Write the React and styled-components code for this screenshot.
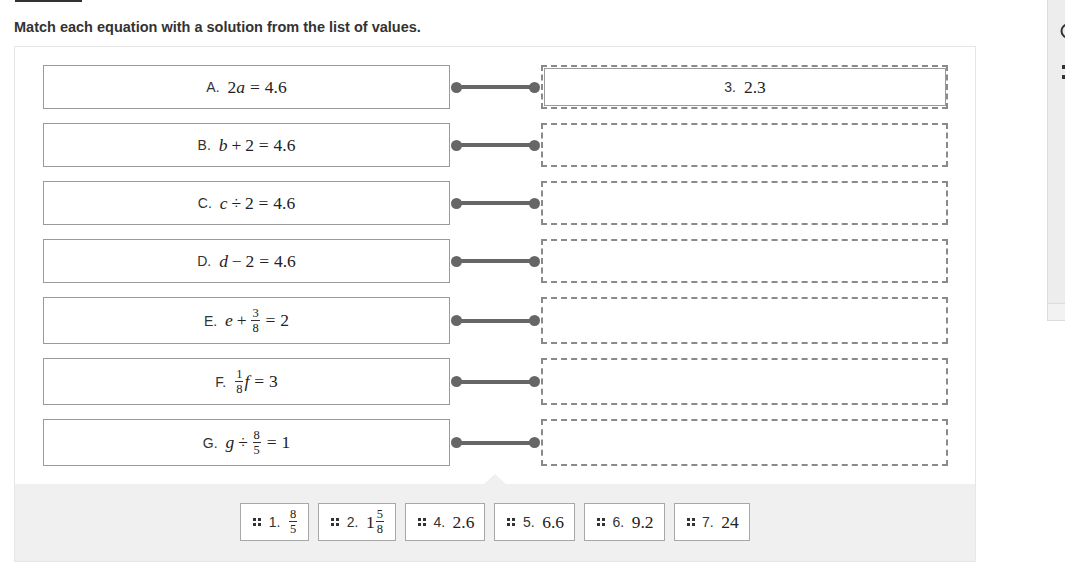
import React from 'react';
import styled, { createGlobalStyle } from 'styled-components';

const Global = createGlobalStyle`
  html, body { margin: 0; padding: 0; background: #fff; }
  body { font-family: "Liberation Sans", Arial, sans-serif; color: #333; }
`;

const Page = styled.div`
  width: 1065px;
  height: 571px;
  overflow: hidden;
  display: flex;
  align-items: flex-start;
`;

const Main = styled.main`
  margin-left: 14px;
  width: 962px;
  flex-shrink: 0;
`;

const TopRule = styled.div`
  margin-left: 1px;
  width: 67px;
  height: 2px;
  background: #333;
`;

const Title = styled.h1`
  margin: 17px 0 0;
  font-family: "Liberation Sans", Arial, sans-serif;
  font-size: 14.5px;
  font-weight: bold;
  line-height: 17px;
  color: #333;
`;

const Panel = styled.section`
  margin-top: 10px;
  border: 1px solid #e6e6e6;
  background: #fff;
`;

const Board = styled.div`
  padding: 18px 27px 18px 28px;
  display: flex;
  flex-direction: column;
  gap: 14px;
`;

const Row = styled.div`
  display: flex;
  height: ${(p) => p.$h}px;
`;

const Prompt = styled.div`
  box-sizing: border-box;
  width: 407px;
  border: 1px solid #9a9a9a;
  display: flex;
  align-items: center;
  justify-content: center;
  gap: 8px;
`;

const Connector = styled.div`
  width: 91px;
  box-sizing: border-box;
  padding: 0 1px 0 1px;
  display: flex;
  align-items: center;
`;

const Dot = styled.span`
  width: 11px;
  height: 11px;
  border-radius: 50%;
  background: #666;
  flex-shrink: 0;
`;

const Wire = styled.span`
  flex: 1;
  height: 4px;
  background: #666;
  margin: 0 -2px;
`;

const Slot = styled.div`
  box-sizing: border-box;
  width: 407px;
  border: 2px dashed #8a8a8a;
  padding: 1px 0 1px 1px;
  display: flex;
`;

const Placed = styled.div`
  flex: 1;
  border: 1px solid #9a9a9a;
  display: flex;
  align-items: center;
  justify-content: center;
  gap: 8px;
`;

const Label = styled.span`
  font-family: "Liberation Sans", Arial, sans-serif;
  font-size: 14px;
  color: #333;
`;

const Expr = styled.span`
  font-family: "Liberation Serif", "DejaVu Serif", serif;
  font-size: 17.5px;
  color: #222;
  display: inline-flex;
  align-items: center;
  white-space: nowrap;
`;

const V = styled.i`
  font-family: "Liberation Serif", "DejaVu Serif", serif;
  font-style: italic;
`;

const Op = styled.span`
  margin: 0 ${(p) => (p.$rel ? '0.28em' : '0.22em')};
`;

const Frac = styled.span`
  display: inline-flex;
  flex-direction: column;
  align-items: center;
  font-family: "Liberation Serif", "DejaVu Serif", serif;
  font-size: 12.5px;
  line-height: 11px;
  margin: 0 1px;
`;

const Num = styled.span`
  border-bottom: 1px solid #333;
  padding: 0 1px 1px;
`;

const Den = styled.span`
  padding: 2px 1px 0;
`;

const Tray = styled.div`
  position: relative;
  background: #f0f0f0;
  padding: 19px 0 20px;
  display: flex;
  justify-content: center;
  gap: 9px;
  &::before {
    content: '';
    position: absolute;
    left: 50%;
    top: -10px;
    margin-left: -11px;
    border-left: 11px solid transparent;
    border-right: 11px solid transparent;
    border-bottom: 10px solid #f0f0f0;
  }
`;

const Chip = styled.div`
  box-sizing: border-box;
  height: 38px;
  border: 1px solid #a8a8a8;
  background: #fff;
  padding: 0 10px 0 12px;
  display: flex;
  align-items: center;
  gap: 7.5px;
`;

const Handle = styled.span`
  display: grid;
  grid-template-columns: 3px 3px;
  gap: 2px;
  & > span {
    width: 3px;
    height: 3px;
    background: #333;
  }
`;

const Side = styled.aside`
  margin-left: 71px;
  width: 30px;
  height: 321px;
  flex-shrink: 0;
  box-sizing: border-box;
  border-left: 1px solid #dcdcdc;
  border-bottom: 1px solid #dcdcdc;
  background: #ededed;
  display: flex;
  flex-direction: column;
`;

const SideTop = styled.div`
  height: 280px;
  border-bottom: 1px solid #dcdcdc;
  padding: 23px 0 0 12px;
  display: flex;
  flex-direction: column;
  gap: 26px;
`;

const SideFoot = styled.div`
  flex: 1;
  background: #f2f2f2;
`;

const Grip = styled.span`
  margin-left: 2px;
  width: 3px;
  height: 14px;
  display: flex;
  flex-direction: column;
  justify-content: space-between;
  &::before, &::after {
    content: '';
    height: 4px;
    background: #333;
  }
`;

const F = ({ n, d }) => (
  <Frac>
    <Num>{n}</Num>
    <Den>{d}</Den>
  </Frac>
);

const prompts = [
  { l: 'A.', h: 44, m: <>2<V>a</V><Op $rel>=</Op>4.6</> },
  { l: 'B.', h: 44, m: <><V>b</V><Op>+</Op>2<Op $rel>=</Op>4.6</> },
  { l: 'C.', h: 44, m: <><V>c</V><Op>÷</Op>2<Op $rel>=</Op>4.6</> },
  { l: 'D.', h: 44, m: <><V>d</V><Op>−</Op>2<Op $rel>=</Op>4.6</> },
  { l: 'E.', h: 47, m: <><V>e</V><Op>+</Op><F n="3" d="8" /><Op $rel>=</Op>2</> },
  { l: 'F.', h: 47, m: <><F n="1" d="8" /><V>f</V><Op $rel>=</Op>3</> },
  { l: 'G.', h: 47, m: <><V>g</V><Op>÷</Op><F n="8" d="5" /><Op $rel>=</Op>1</> },
];

const chips = [
  { l: '1.', m: <F n="8" d="5" /> },
  { l: '2.', m: <>1<F n="5" d="8" /></> },
  { l: '4.', m: <>2.6</> },
  { l: '5.', m: <>6.6</> },
  { l: '6.', m: <>9.2</> },
  { l: '7.', m: <>24</> },
];

export default function App() {
  return (
    <>
      <Global />
      <Page>
        <Main>
          <TopRule />
          <Title>Match each equation with a solution from the list of values.</Title>
          <Panel>
            <Board>
              {prompts.map((p, i) => (
                <Row key={p.l} $h={p.h}>
                  <Prompt>
                    <Label>{p.l}</Label>
                    <Expr>{p.m}</Expr>
                  </Prompt>
                  <Connector>
                    <Dot />
                    <Wire />
                    <Dot />
                  </Connector>
                  <Slot>
                    {i === 0 && (
                      <Placed>
                        <Label>3.</Label>
                        <Expr>2.3</Expr>
                      </Placed>
                    )}
                  </Slot>
                </Row>
              ))}
            </Board>
            <Tray>
              {chips.map((c) => (
                <Chip key={c.l}>
                  <Handle>
                    <span /><span /><span /><span />
                  </Handle>
                  <Label>{c.l}</Label>
                  <Expr>{c.m}</Expr>
                </Chip>
              ))}
            </Tray>
          </Panel>
        </Main>
        <Side>
          <SideTop>
            <svg width="16" height="16" viewBox="0 0 16 16">
              <circle cx="8" cy="8" r="6.5" fill="none" stroke="#333" strokeWidth="2" />
            </svg>
            <Grip />
          </SideTop>
          <SideFoot />
        </Side>
      </Page>
    </>
  );
}
